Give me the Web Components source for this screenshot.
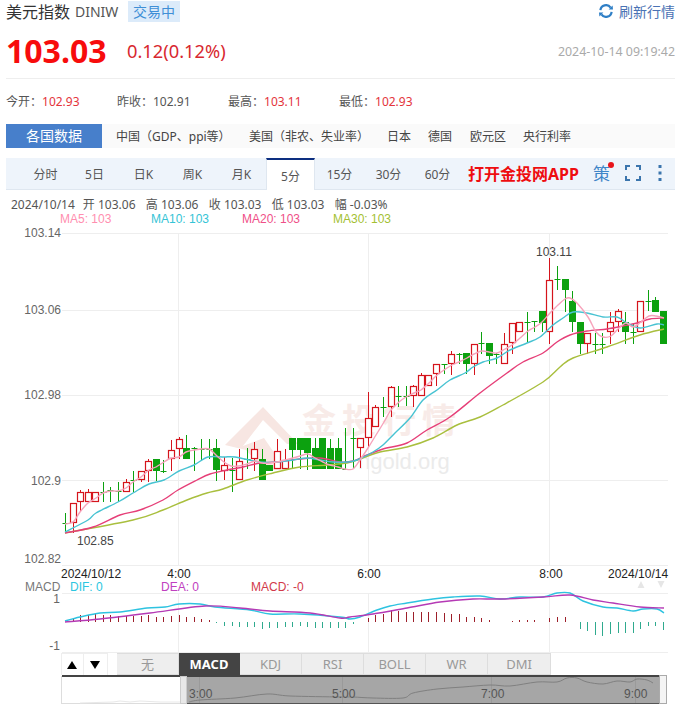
<!DOCTYPE html>
<html lang="zh">
<head>
<meta charset="utf-8">
<title>美元指数</title>
<style>
  html, body { margin: 0; padding: 0; background: #fff; }
  body { width: 679px; height: 706px; overflow: hidden; font-family: "Noto Sans", "Noto Sans CJK SC", sans-serif; }
</style>
</head>
<body>
<quote-head></quote-head>
<country-nav></country-nav>
<period-tabs></period-tabs>
<kline-legend></kline-legend>
<kline-chart></kline-chart>
<indicator-tabs></indicator-tabs>
<range-slider></range-slider>

<script>
const CJK = '"Noto Sans", "Noto Sans CJK SC", sans-serif';

// title, price, stats
class QuoteHead extends HTMLElement {
  connectedCallback() {
    const root = this.attachShadow({ mode: 'open' });
    root.innerHTML = `
      <style>
        :host { display: block; padding: 0 4px 0 6px; font-family: ${CJK}; }
        .top { display: flex; align-items: center; height: 22px; }
        .name { font-size: 16px; color: #333; width: 69px; white-space: nowrap; }
        .code { font-size: 14px; color: #555; width: 53px; }
        .state { font-size: 14px; color: #3f8fd6; background: #dcebfa; width: 52px; height: 21px; line-height: 21px; text-align: center; }
        .refresh { margin-left: auto; display: flex; align-items: center; gap: 5px; font-size: 14px; color: #4a72b4; }
        .price { display: flex; align-items: center; height: 56px; }
        .now { font-size: 32px; font-weight: 700; color: #f70c0c; width: 121px; }
        .chg { font-size: 18.3px; color: #d8282f; }
        .time { margin-left: auto; font-size: 12.4px; color: #aaa; padding-top: 2px; }
        .rule { height: 1px; background: #eee; }
        .stats { display: flex; height: 45px; align-items: center; font-size: 12px; color: #555; padding-bottom: 2px; box-sizing: border-box; }
        .stats span { width: 111px; white-space: nowrap; }
        .stats b { font-weight: 400; color: #e4343c; }
      </style>
      <div class="top">
        <span class="name">美元指数</span><span class="code">DINIW</span><span class="state">交易中</span>
        <span class="refresh">
          <svg width="16" height="14" viewBox="0 0 16 14" fill="none">
            <path d="M2.4 6.2A5.6 5.6 0 0 1 12.6 3.6" stroke="#2f7fc6" stroke-width="2.2"/>
            <path d="M13.6 7.8A5.6 5.6 0 0 1 3.4 10.4" stroke="#2f7fc6" stroke-width="2.2"/>
            <path d="M10.6 5.4L15 5.6L14.6 1.6Z M5.4 8.6L1 8.4L1.4 12.4Z" fill="#2f7fc6"/>
          </svg>
          刷新行情
        </span>
      </div>
      <div class="price">
        <span class="now">103.03</span><span class="chg">0.12(0.12%)</span>
        <span class="time">2024-10-14 09:19:42</span>
      </div>
      <div class="rule"></div>
      <div class="stats">
        <span>今开：<b>102.93</b></span><span>昨收：102.91</span><span>最高：<b>103.11</b></span><span>最低：<b>102.93</b></span>
      </div>`;
  }
}

// blue label + country links
class CountryNav extends HTMLElement {
  connectedCallback() {
    const root = this.attachShadow({ mode: 'open' });
    const links = [['中国（GDP、ppi等）', 133], ['美国（非农、失业率）', 138], ['日本', 41], ['德国', 42], ['欧元区', 53], ['央行利率', 60]];
    root.innerHTML = `
      <style>
        :host { display: flex; margin: 0 4px 0 6px; height: 24px; background: #fafafa; font-family: ${CJK}; font-size: 12px; color: #444; align-items: center; }
        .lead { width: 96px; height: 24px; line-height: 24px; background: #477fcb; color: #fff; text-align: center; font-size: 14px; margin-right: 14px; }
        a { white-space: nowrap; flex: none; }
      </style>
      <span class="lead">各国数据</span>
      ${links.map(([t, w]) => `<a style="width:${w}px">${t}</a>`).join('')}`;
  }
}

// period tabs bar
class PeriodTabs extends HTMLElement {
  connectedCallback() {
    const root = this.attachShadow({ mode: 'open' });
    const labels = ['分时', '5日', '日K', '周K', '月K', '5分', '15分', '30分', '60分'];
    root.innerHTML = `
      <style>
        :host { display: flex; margin: 10px 4px 0 6px; height: 31px; background: #eef4fb; border-bottom: 1px solid #dfe7f0; font-family: ${CJK}; font-size: 12px; color: #555; padding-left: 15px; }
        .tab { width: 49px; text-align: center; line-height: 34px; box-sizing: border-box; flex: none; }
        .tab.on { background: #fff; border-top: 2px solid #0d2f80; line-height: 33px; height: 32px; border-left: 1px solid #dfe7f0; border-right: 1px solid #dfe7f0; }
        .app { font-size: 16px; font-weight: 700; color: #ee0d10; margin-left: 6px; white-space: nowrap; line-height: 32px; width: 126px; }
        .ce { font-size: 17px; color: #3f86c8; line-height: 32px; position: relative; width: 31px; margin-left: -1px; margin-right: 1px; }
        .ce i { position: absolute; left: 15px; top: 4px; width: 6px; height: 6px; border-radius: 50%; background: #e8141b; }
        svg { margin-top: 7px; flex: none; }
      </style>
      ${labels.map(l => `<span class="tab${l === '5分' ? ' on' : ''}">${l}</span>`).join('')}
      <span class="app">打开金投网APP</span>
      <span class="ce">策<i></i></span>
      <svg width="16" height="16" viewBox="0 0 16 16" fill="none" stroke="#3b75ad" stroke-width="2">
        <path d="M1 5V1H5M11 1H15V5M15 11V15H11M5 15H1V11"/>
      </svg>
      <svg style="margin-left:17px" width="4" height="16" viewBox="0 0 4 16" fill="#3b75ad">
        <rect x="0.5" y="0" width="3" height="3"/><rect x="0.5" y="6.5" width="3" height="3"/><rect x="0.5" y="13" width="3" height="3"/>
      </svg>`;
  }
}

// OHLC line and moving average line above the chart
class KlineLegend extends HTMLElement {
  connectedCallback() {
    const root = this.attachShadow({ mode: 'open' });
    root.innerHTML = `
      <style>
        :host { display: block; height: 36px; padding-top: 7px; box-sizing: border-box; }
        .ohlc { display: flex; gap: 10.3px; padding-left: 11px; height: 15px; font: 12px/15px ${CJK}; color: #555; white-space: nowrap; }
        .ohlc span:first-child { margin-right: -2.3px; }
        .ma { display: flex; padding-left: 60px; height: 14px; font: 12px/14px "Liberation Sans", sans-serif; }
        .ma span { width: 91px; }
      </style>
      <div class="ohlc"><span>2024/10/14</span><span>开 103.06</span><span>高 103.06</span><span>收 103.03</span><span>低 103.03</span><span>幅 -0.03%</span></div>
      <div class="ma">
        <span style="color:#ff8fb0">MA5: 103</span><span style="color:#35c4d6">MA10: 103</span><span style="color:#ef4f88">MA20: 103</span><span style="color:#a4bf33">MA30: 103</span>
      </div>`;
  }
}

// candles: [kind, high, bodyTop, bodyBottom, low]; r=hollow red, g=solid green, d=doji
const X = i => 65 + i * 7.57;
const CANDLES = [
  ['d',513,523,523,533],['r',503,503,523,533],['r',490,492,502,512],['r',489,492,502,502],['r',492,492,502,502],
  ['d',482,492,492,502],['d',487,490,491,502],['d',482,491,491,502],['r',479,482,492,492],['d',471,480,480,492],
  ['r',471,471,480,482],['r',459,461,471,482],['g',459,459,471,481],['d',460,471,471,473],['r',440,450,459,471],
  ['r',437,439,449,459],['g',435,448,459,459],['d',447,448,448,471],['d',439,449,449,460],['d',439,449,449,459],
  ['g',439,448,470,481],['r',457,465,471,480],['d',458,470,470,492],['r',449,461,480,480],['d',448,459,459,469],
  ['r',442,449,459,471],['g',449,459,480,480],['g',465,465,471,471],['r',439,451,469,469],['r',449,460,469,469],
  ['g',438,438,450,469],['g',438,438,450,469],['g',438,438,453,470],['g',438,448,469,469],['g',438,438,469,469],
  ['g',439,448,469,469],['g',438,448,469,469],['d',428,469,469,469],['d',428,438,438,468],['r',438,438,448,468],
  ['r',392,418,438,448],['r',405,407,427,427],['d',397,407,407,417],['r',386,387,407,417],['d',386,396,396,407],
  ['d',386,396,396,406],['r',385,386,396,407],['r',373,375,396,396],['r',375,375,386,386],['r',364,364,374,386],
  ['d',364,364,364,374],['r',351,354,364,375],['d',353,354,354,364],['g',353,353,364,374],['r',344,344,364,375],
  ['d',332,343,343,354],['g',343,343,356,364],['d',353,354,354,364],['r',333,344,364,364],['r',323,323,343,354],
  ['r',322,322,332,332],['d',312,322,322,342],['d',321,321,321,332],['g',311,311,323,332],['r',258,280,332,344],
  ['d',266,279,279,290],['g',279,279,290,312],['g',291,301,322,332],['g',322,322,344,354],['r',333,333,344,354],
  ['d',333,344,344,354],['d',333,344,344,354],['r',312,322,332,344],['r',309,311,322,332],['g',312,322,332,344],
  ['d',323,332,332,344],['r',301,301,332,332],['d',290,301,301,311],['g',297,300,312,312],['g',311,311,344,344]
];

// MACD bar heights, + red above zero, - teal below
const HIST = [0,4,7,7,8,7,7,6,6,6,6,7,5,5,6,7,5,5,3,2,-1,-4,-4,-5,-5,-5,-7,-6,-6,-5,-5,-4,-5,-6,-6,-6,-6,
  -6,-2,0,4,7,8,12,11,10,10,10,10,10,9,8,8,5,5,4,2,0,0,1,2,2,2,0,4,5,5,0,-7,-9,-13,-14,-12,-11,-11,-11,-7,-4,-4,-8];

const MA5 = '65,524 73,522 80,512 88,503 96,498 103,493 111,491 118,491 126,488 133,482 141,477 149,470 156,467 164,462 171,458 179,457 186,452 194,450 201,449 209,449 217,456 224,462 231,466 239,466 247,464 255,461 262,463 270,463 277,462 285,460 293,458 300,456 308,454 315,458 323,462 330,465 338,467 345,469 353,469 360,460 368,448 376,435 384,422 391,410 399,402 406,397 414,393 421,390 429,383 436,376 444,370 452,365 459,362 467,358 474,354 482,351 489,352 497,353 505,349 512,345 520,338 528,331 535,327 542,322 550,313 558,305 565,299 570,298 577,303 588,317 596,332 603,337 611,336 618,329 626,323 633,327 641,322 649,316 656,316 664,318';
const MA10 = '65,532 88,520 96,513 118,502 133,493 149,484 164,480 179,471 194,465 208,457 224,457 235,457 260,462 277,462 293,460 307,458 320,460 333,462 347,462 357,460 373,452 383,445 395,433 410,418 423,400 437,390 450,380 465,373 473,367 483,362 497,358 510,350 527,343 540,337 553,325 563,318 573,312 587,313 603,317 617,317 627,323 640,328 657,324 664,325';
const MA20 = '65,533 93,527 120,515 140,510 163,500 178,490 197,480 210,474 227,470 243,467 260,463 277,462 300,459 320,458 340,462 353,461 367,455 383,449 407,443 427,430 450,417 480,393 507,373 523,362 543,353 557,342 570,335 587,331 607,329 623,326 637,323 650,319 664,318';
const MA30 = '65,533 133,520 163,510 187,500 207,493 223,489 247,480 273,473 300,467 327,465 347,463 360,459 380,452 407,447 433,438 457,425 480,417 503,405 543,382 560,367 573,358 607,347 640,335 664,329';
const DIF = '65,621 80,617 100,613 120,612 147,608 165,607 179,604 200,604 215,607 250,610 270,614 300,614 340,617 350,619 360,617 377,610 390,606 407,603 433,599 453,597 480,596 500,599 520,597 543,597 557,593 570,593 583,601 603,607 617,608 633,611 643,609 657,609 664,613';
const DEA = '65,622 100,619 150,613 205,606 240,608 270,611 310,613 340,618 350,617 373,614 407,608 440,602 473,599 500,599 543,597 570,595 593,600 613,603 640,607 664,608';
const MINI = '189,702 200,700 235,698 267,694 290,696 340,697 353,697 373,698 403,698 413,693 437,689 463,687 490,685 510,686 537,682 557,682 567,678 577,678 587,682 603,684 617,681 630,682 637,679 647,680 653,683';

// catmull-rom through the points, gives the soft curves of the MA lines
function smooth(str) {
  const p = str.split(' ').map(s => s.split(',').map(Number));
  let d = `M${p[0][0]} ${p[0][1]}`;
  for (let i = 0; i < p.length - 1; i++) {
    const a = p[i - 1] || p[i], b = p[i], c = p[i + 1], e = p[i + 2] || c;
    const c1x = b[0] + (c[0] - a[0]) / 6, c1y = b[1] + (c[1] - a[1]) / 6;
    const c2x = c[0] - (e[0] - b[0]) / 6, c2y = c[1] - (e[1] - b[1]) / 6;
    d += `C${c1x.toFixed(1)} ${c1y.toFixed(1)} ${c2x.toFixed(1)} ${c2y.toFixed(1)} ${c[0]} ${c[1]}`;
  }
  return d;
}

function candleSvg() {
  const G = '#0ca10f', R = '#d5141c';
  return CANDLES.map((c, i) => {
    const [k, hi, top, bot, lo] = c;
    const x = Math.round(X(i)) + .5;
    const col = k === 'r' ? R : G;
    let s = `<path d="M${x} ${hi}V${lo}" stroke="${col}"/>`;
    if (k === 'd') s += `<path d="M${x - 3} ${top + .5}H${x + 3}" stroke="${col}"/>`;
    else if (k === 'g') s += `<rect x="${x - 3.5}" y="${top}" width="7" height="${bot - top}" fill="${col}"/>`;
    else s += `<rect x="${x - 3}" y="${top + .5}" width="6" height="${bot - top - 1}" fill="#fff" stroke="${col}" stroke-width="1.2"/>`;
    return s;
  }).join('');
}

function histSvg() {
  return HIST.map((h, i) => {
    if (!h) return '';
    const x = Math.round(X(i)) + .5;
    return `<path d="M${x} 622V${622 - h}" stroke="${h > 0 ? '#9d1f2a' : '#2faa8e'}"/>`;
  }).join('');
}

// price canvas and MACD pane, viewBox keeps page coordinates
class KlineChart extends HTMLElement {
  connectedCallback() {
    const root = this.attachShadow({ mode: 'open' });
    const line = (pts, col) => `<path d="${smooth(pts)}" fill="none" stroke="${col}" stroke-width="1.4"/>`;
    root.innerHTML = `
      <style>
        :host { display: block; height: 427px; }
        svg { display: block; font-family: "Liberation Sans", sans-serif; font-size: 12px; }
        .ax { fill: #666; }
        .dk { fill: #222; }
        .wm { font-family: ${CJK}; font-size: 34px; font-weight: 700; fill: #f8ebe8; letter-spacing: 6px; }
      </style>
      <svg width="679" height="427" viewBox="0 226 679 427">
        <g stroke="#eee" fill="none">
          <path d="M62 233.5H668M62 310.5H668M62 395.5H668M62 480.5H668M62 565.5H668"/>
          <path d="M178.5 233V565M368.5 233V565M549.5 233V565"/>
        </g>
        <g text-anchor="end" class="ax">
          <text x="61" y="237">103.14</text><text x="61" y="314">103.06</text><text x="61" y="399">102.98</text><text x="61" y="485">102.9</text><text x="61" y="563">102.82</text>
        </g>

        <!-- watermark -->
        <path d="M225 445L263 407L298 444L287 444L263 420L243 446L264 438L286 470L264 470L246 450Z" fill="#f7e6e2"/>
        <text x="302" y="433" class="wm">金投行情</text>
        <text x="358" y="469" font-size="22" fill="#ebebeb">ngold.org</text>

        ${candleSvg()}
        ${line(MA30, '#a9bf3e')}${line(MA20, '#e63f78')}${line(MA10, '#48c3d2')}${line(MA5, '#f7a3bb')}

        <text x="77" y="545" fill="#444">102.85</text>
        <text x="536" y="256" fill="#444">103.11</text>

        <g class="dk">
          <text x="61" y="577.5">2024/10/12</text>
          <text x="179" y="577.5" text-anchor="middle">4:00</text>
          <text x="369" y="577.5" text-anchor="middle">6:00</text>
          <text x="551" y="577.5" text-anchor="middle">8:00</text>
          <text x="608" y="577.5">2024/10/14</text>
        </g>
        <text x="25" y="590.5" fill="#777">MACD</text>
        <text x="70" y="590.5" fill="#2cc6e0">DIF: 0</text>
        <text x="161" y="590.5" fill="#c040c0">DEA: 0</text>
        <text x="251" y="590.5" fill="#d23a4a">MACD: -0</text>
        <path d="M640 581l3.5 7h-7zM656.5 581h7l-3.5 7z" fill="#e6e6e6" transform="translate(1 0)"/>

        <g stroke="#eee" fill="none">
          <path d="M62 593.5H668M62 652.5H668"/>
          <path d="M178.5 593V652M368.5 593V652M549.5 593V652"/>
        </g>
        <text x="60" y="603" text-anchor="end" class="ax">1</text>
        <text x="60" y="650" text-anchor="end" class="ax">-1</text>
        ${histSvg()}
        ${line(DIF, '#2ec3e0')}${line(DEA, '#b53ab5')}
      </svg>`;
  }
}

// up/down arrows and indicator switcher
class IndicatorTabs extends HTMLElement {
  connectedCallback() {
    const root = this.attachShadow({ mode: 'open' });
    const tabs = [['无', 62], ['MACD', 61], ['KDJ', 62], ['RSI', 62], ['BOLL', 62], ['WR', 62], ['DMI', 63]];
    root.innerHTML = `
      <style>
        :host { display: flex; height: 22px; padding-left: 61px; font: 13px/21px ${CJK}; color: #999; }
        .arrow { width: 23px; box-sizing: border-box; border: 1px solid #eee; border-width: 1px 1px 0 1px; display: flex; align-items: center; justify-content: center; padding-right: 2px; }
        .arrow + .arrow { border-left: 0; margin-right: 9px; width: 24px; }
        .tab { box-sizing: border-box; background: #eee; border: 1px solid #ddd; border-left: 0; text-align: center; height: 22px; flex: none; }
        .tab.on { background: #444; border-color: #444; color: #fff; font-weight: 700; }
      </style>
      <span class="arrow"><svg width="10" height="8"><path d="M0 8L5 0L10 8Z" fill="#000"/></svg></span>
      <span class="arrow"><svg width="10" height="8"><path d="M0 0H10L5 8Z" fill="#000"/></svg></span>
      ${tabs.map(([t, w]) => `<span class="tab${t === 'MACD' ? ' on' : ''}" style="width:${w}px">${t}</span>`).join('')}`;
  }
}

// navigator under the chart
class RangeSlider extends HTMLElement {
  connectedCallback() {
    const root = this.attachShadow({ mode: 'open' });
    root.innerHTML = `
      <style>
        :host { display: block; height: 31px; }
        svg { display: block; font: 12px "Liberation Sans", sans-serif; }
        text { fill: #555; }
      </style>
      <svg width="679" height="31" viewBox="0 675 679 31">
        <rect x="61.5" y="676.5" width="605" height="27" fill="#fff" stroke="#ddd"/>
        <rect x="62" y="675" width="605" height="2" fill="#444"/>
        <rect x="187" y="677" width="472" height="26" fill="#a6a6a6"/>
        <path d="M199.5 677V703M342.5 677V703M491.5 677V703M635.5 677V703" stroke="#9a9a9a"/>
        <path d="M80 703L113 702L120 701L130 702L140 701L160 702L187 702" fill="none" stroke="#e8e8e8"/>
        <path d="${smooth(MINI)}" fill="none" stroke="#808080"/>
        <rect x="187" y="703" width="472" height="1" fill="#555"/>
        <rect x="180.5" y="676.5" width="6" height="27" fill="#e8e8e8" stroke="#ccc"/>
        <rect x="659.5" y="675.5" width="7" height="28" fill="#f4f4f4" stroke="#aaa"/>
        <text x="189" y="698">3:00</text><text x="332" y="698">5:00</text><text x="481" y="698">7:00</text><text x="624" y="698">9:00</text>
      </svg>`;
  }
}

customElements.define('quote-head', QuoteHead);
customElements.define('country-nav', CountryNav);
customElements.define('period-tabs', PeriodTabs);
customElements.define('kline-legend', KlineLegend);
customElements.define('kline-chart', KlineChart);
customElements.define('indicator-tabs', IndicatorTabs);
customElements.define('range-slider', RangeSlider);
</script>
</body>
</html>
